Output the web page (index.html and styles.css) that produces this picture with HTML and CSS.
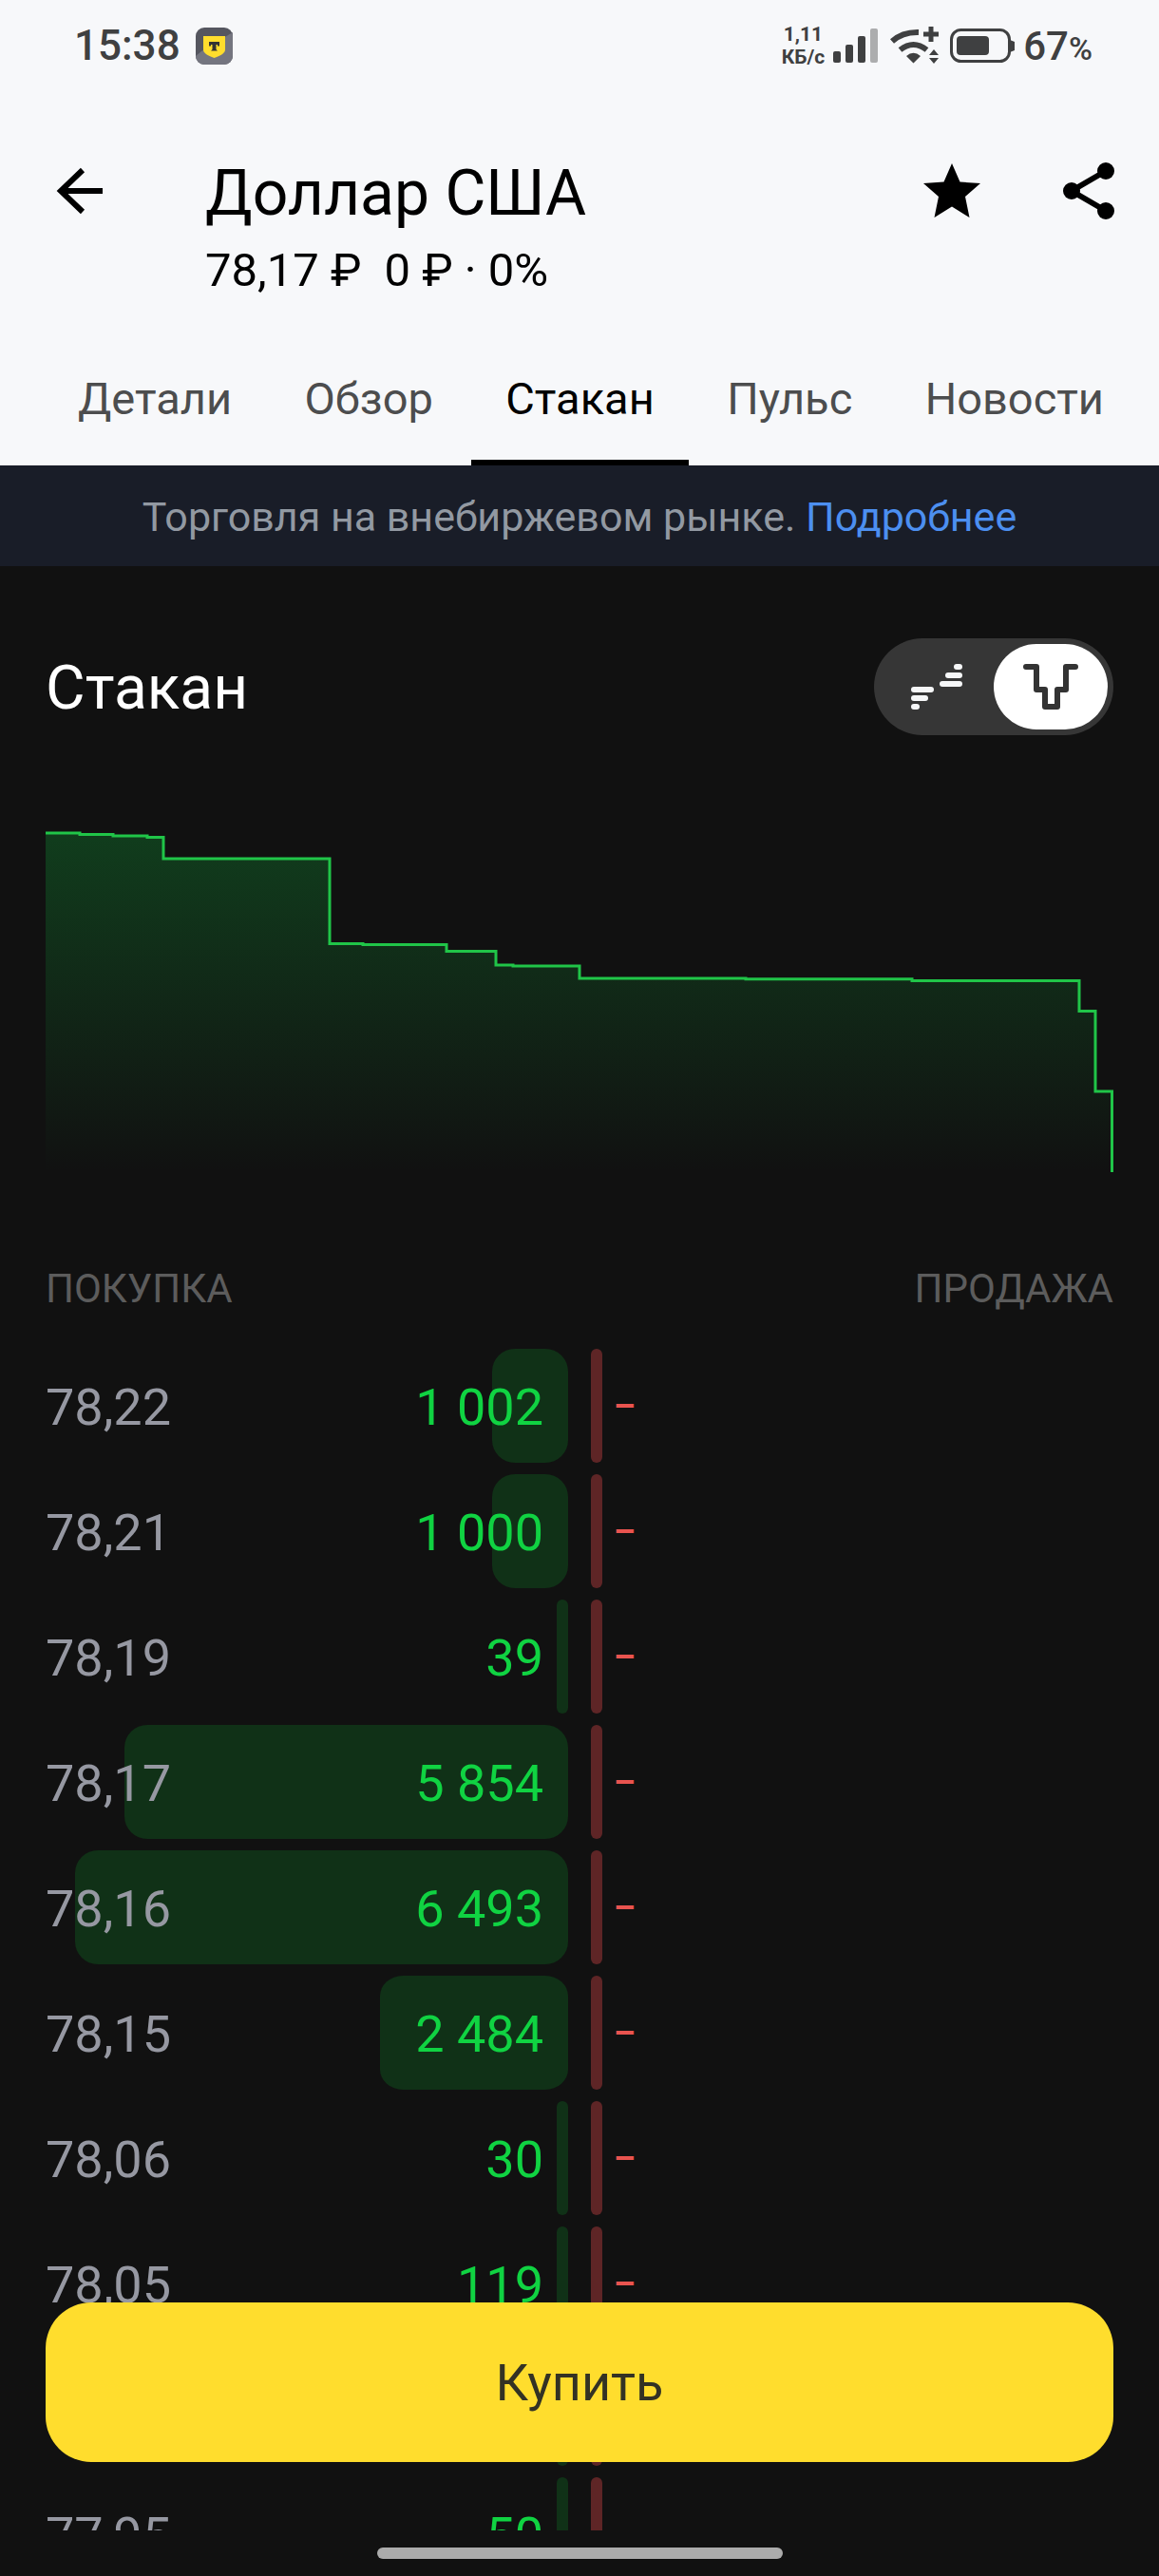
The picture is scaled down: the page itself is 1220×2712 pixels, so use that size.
FILE: index.html
```html
<!DOCTYPE html>
<html lang="ru">
<head>
<meta charset="utf-8">
<meta name="viewport" content="width=device-width, initial-scale=1">
<title>Доллар США — Стакан</title>
<link rel="stylesheet" href="styles.css">
</head>
<body>
<div class="app">
  <header class="top">
    <div class="status">
      <span class="status-time">15:38</span>
      <svg class="status-app" viewBox="0 0 39 39" width="39" height="39" aria-hidden="true">
        <rect width="39" height="39" rx="9" fill="#55565f"/>
        <path d="M39 5v25a9 9 0 0 1-9 9H9a9 9 0 0 1-9-9l6-5z" fill="#74757f"/>
        <path d="M8 9h23v14c0 4-4 6-11.500 9C12 29 8 27 8 23z" fill="#ffdd2d"/>
        <path d="M14 15h11v4.500h-2V18h-1.500v5l1.500 1.500h-7l1.500-1.500v-5H16v1.500h-2z" fill="#333"/>
      </svg>
      <div class="status-right">
        <span class="status-speed">1,11<br>КБ/с</span>
        <svg viewBox="0 0 47 36" width="47" height="36" aria-hidden="true" fill="#3f4041">
          <rect x="0" y="24" width="8" height="12" rx="2"/>
          <rect x="13" y="17" width="8" height="19" rx="2"/>
          <rect x="26" y="8" width="8" height="28" rx="2"/>
          <rect x="39" y="0" width="8" height="36" rx="2" fill="#acadae"/>
        </svg>
        <svg class="status-wifi" viewBox="0 0 52 40" width="52" height="40" aria-hidden="true">
          <g fill="none" stroke="#3f4041" stroke-width="6">
            <path d="M2 15.500Q13 5.500 30 6"/>
            <path d="M10.500 24.500Q24.500 13.500 38.500 24.500"/>
            <path d="M35 8h16M43 0v16" stroke-width="5"/>
          </g>
          <path d="M17 31q7.500-6.500 15 0l-7.500 7.500zM41 30l5-6 5 6zM41 33h10l-5 6z" fill="#3f4041"/>
        </svg>
        <svg viewBox="0 0 68 36" width="68" height="36" aria-hidden="true">
          <rect x="1.500" y="1.500" width="61" height="33" rx="10" fill="none" stroke="#3f4041" stroke-width="3"/>
          <rect x="7" y="8" width="34" height="20" rx="4" fill="#3f4041"/>
          <path d="M63 12l5 2v9l-5 2z" fill="#3f4041"/>
        </svg>
        <span class="status-charge">67<small>%</small></span>
      </div>
    </div>
    <div class="bar">
      <button class="icon-btn" type="button" aria-label="Назад">
        <svg viewBox="0 0 60 60" width="60" height="60" fill="none" stroke="#000" stroke-width="6"><path d="M54 30H10M33 8L10 30l23 22"/></svg>
      </button>
      <div class="heading">
        <h1 class="title">Доллар США</h1>
        <p class="quote"><span>78,17 ₽</span><span>0 ₽ · 0%</span></p>
      </div>
      <div class="actions">
        <button class="icon-btn" type="button" aria-label="В избранное">
          <svg viewBox="0 0 60 60" width="60" height="60"><path d="M30 1l8.500 19.500L60 22 44 36l4.500 22L30 46.500 11.500 58 16 36 0 22l21.500-1.500z"/></svg>
        </button>
        <button class="icon-btn" type="button" aria-label="Поделиться">
          <svg viewBox="0 0 60 60" width="60" height="60"><path d="M48 9L12 30l36 21" fill="none" stroke="#000" stroke-width="6"/><circle cx="48" cy="9" r="9"/><circle cx="12" cy="30" r="9"/><circle cx="48" cy="51" r="9"/></svg>
        </button>
      </div>
    </div>
    <nav class="tabs">
      <a class="tab" href="#details">Детали</a>
      <a class="tab" href="#overview">Обзор</a>
      <a class="tab tab-active" href="#book" aria-current="page">Стакан</a>
      <a class="tab" href="#pulse">Пульс</a>
      <a class="tab" href="#news">Новости</a>
    </nav>
  </header>
  <p class="notice">Торговля на внебиржевом рынке. <a href="#more">Подробнее</a></p>
  <main class="content" id="book">
    <div class="section-head">
      <h2 class="subtitle">Стакан</h2>
      <div class="switch">
        <button class="switch-item" type="button" aria-label="Список" aria-pressed="false">
          <svg viewBox="0 0 54 48" width="54" height="48" fill="#f6f7f8">
            <rect x="45" y="0" width="9" height="6" rx="3"/><rect x="36" y="9" width="18" height="6" rx="3"/><rect x="30" y="18" width="24" height="6" rx="3"/>
            <rect x="0" y="24" width="24" height="6" rx="3"/><rect x="0" y="33" width="18" height="6" rx="3"/><rect x="0" y="42" width="9" height="6" rx="3"/>
          </svg>
        </button>
        <button class="switch-item switch-on" type="button" aria-label="График" aria-pressed="true">
          <svg viewBox="0 0 58 48" width="58" height="48" fill="none" stroke="#333" stroke-width="6" stroke-linecap="round" stroke-linejoin="round"><path d="M3 3h11v24h9v18h13V27h9V3h10"/></svg>
        </button>
      </div>
    </div>
    <svg class="chart" viewBox="0 0 1124 360" preserveAspectRatio="none" role="img" aria-label="Глубина рынка">
      <defs><linearGradient id="depth" x1="0" y1="0" x2="0" y2="1"><stop offset="0" stop-color="#0fd044" stop-opacity=".23"/><stop offset="1" stop-color="#0fd044" stop-opacity="0"/></linearGradient></defs>
      <path fill="url(#depth)" d="M0 3H36V4.500H71V6H107V7.500H124V30H299V119.500H334V120.500H422V127.500H474V142H492V143H562V156H737V156.700H912V158.500H1088V190.500H1105V275H1122.500V360H0z"/>
      <path fill="none" stroke="#20c548" stroke-width="3" d="M0 3H36V4.500H71V6H107V7.500H124V30H299V119.500H334V120.500H422V127.500H474V142H492V143H562V156H737V156.700H912V158.500H1088V190.500H1105V275H1122.500V360"/>
    </svg>
    <table class="book">
      <thead><tr><th>Покупка</th><th class="ask-head">Продажа</th></tr></thead>
      <tbody>
        <tr><td class="bid" style="--depth:80px"><span class="price">78,22</span><span class="amount">1 002</span></td><td class="ask">–</td></tr>
        <tr><td class="bid" style="--depth:80px"><span class="price">78,21</span><span class="amount">1 000</span></td><td class="ask">–</td></tr>
        <tr><td class="bid"><span class="price">78,19</span><span class="amount">39</span></td><td class="ask">–</td></tr>
        <tr><td class="bid" style="--depth:85%"><span class="price">78,17</span><span class="amount">5 854</span></td><td class="ask">–</td></tr>
        <tr><td class="bid" style="--depth:94.3%"><span class="price">78,16</span><span class="amount">6 493</span></td><td class="ask">–</td></tr>
        <tr><td class="bid" style="--depth:36%"><span class="price">78,15</span><span class="amount">2 484</span></td><td class="ask">–</td></tr>
        <tr><td class="bid"><span class="price">78,06</span><span class="amount">30</span></td><td class="ask">–</td></tr>
        <tr><td class="bid"><span class="price">78,05</span><span class="amount">119</span></td><td class="ask">–</td></tr>
        <tr><td class="bid"></td><td class="ask"></td></tr>
        <tr><td class="bid"><span class="price">77,95</span><span class="amount">50</span></td><td class="ask"></td></tr>
      </tbody>
    </table>
  </main>
  <button class="buy" type="button">Купить</button>
  <div class="home"></div>
</div>
</body>
</html>
```
FILE: styles.css
```css
* { box-sizing: border-box; }

body {
  margin: 0;
  background: #111;
  font-family: Roboto, "Noto Sans", sans-serif;
  font-size: 54px;
}

h1, h2, p { margin: 0; font-weight: 400; }
button { border: 0; padding: 0; background: none; font: inherit; cursor: pointer; }
a { text-decoration: none; }
svg { display: block; flex: none; }

.app {
  position: relative;
  display: flex;
  flex-direction: column;
  height: 100vh;
}

.top { background: #f7f8fa; color: #000; }

/* Device status row */
.status {
  display: flex;
  align-items: center;
  gap: 16px;
  height: 96px;
  padding: 0 70px 0 78px;
  color: #3f4041;
  font-weight: 500;
}
.status-time { font-size: 44px; }
.status-right { display: flex; align-items: center; gap: 9px; margin-left: auto; }
.status-speed { font-size: 21px; line-height: 24px; font-weight: 700; text-align: center; }
.status-wifi { margin: 0 2px 0 4px; }
.status-charge { font-size: 42px; }
.status-charge small { font-size: 34px; }

/* Title row */
.bar {
  display: flex;
  align-items: flex-start;
  padding: 60px 44px 0 54px;
}
.icon-btn { display: block; margin-top: 15px; }
.heading { flex: 1; margin-left: 102px; }
.title { padding-top: 3px; font-size: 66px; line-height: 90px; }
.quote { display: flex; gap: 24px; font-size: 49px; line-height: 72px; }
.actions { display: flex; gap: 84px; }

.tabs {
  display: flex;
  justify-content: space-between;
  margin-top: 36px;
  padding: 0 22px 0 46px;
}
.tab {
  padding: 31px 36px 32px;
  border-bottom: 6px solid transparent;
  color: #4c4d4e;
  font-size: 47px;
  line-height: 64px;
}
.tab-active { border-color: #000; color: #000; }

.notice {
  padding: 21px 48px 19px;
  background: #191d28;
  color: #9299a2;
  font-size: 43px;
  line-height: 66px;
  text-align: center;
}
.notice a { color: #4c8ff0; }

.content {
  flex: 1;
  min-height: 0;
  padding: 76px 48px 0;
  overflow-y: auto;
  scrollbar-width: none;
  color: #fff;
}

.section-head { display: flex; align-items: center; justify-content: space-between; }
.subtitle { padding-top: 3px; font-size: 64px; line-height: 90px; }

.switch { display: flex; padding: 6px; border-radius: 51px; background: #363636; }
.switch-item {
  display: flex;
  align-items: center;
  justify-content: center;
  width: 120px;
  height: 90px;
  border-radius: 45px;
}
.switch-on { background: #fff; }

.chart { width: 100%; height: 360px; margin: 100px 0 96px; }

/* Order book */
.book { display: block; }
.book thead, .book tbody { display: grid; gap: 12px; }
.book tr { display: grid; grid-template-columns: 1fr 1fr; column-gap: 24px; }
.book th {
  padding: 0 0 36px;
  color: #5c5c5c;
  font-size: 42px;
  line-height: 54px;
  font-weight: 400;
  text-align: left;
  text-transform: uppercase;
}
.book .ask-head { text-align: right; }

.bid, .ask {
  position: relative;
  display: flex;
  align-items: center;
  justify-content: space-between;
  height: 120px;
  padding: 2px 26px 0 0;
}
.bid::before, .ask::before {
  content: "";
  position: absolute;
  inset: 0 0 0 auto;
  width: var(--depth, 12px);
  border-radius: min(24px, calc(var(--depth, 12px) / 2));
  background: #103117;
}
.ask { padding: 2px 0 0 24px; color: #e9544f; font-size: 36px; font-weight: 700; }
.ask::before { inset: 0 auto 0 0; background: #5e2526; }
.price, .amount { position: relative; }
.price { color: #9698a2; }
.amount { color: #10d342; }

.buy {
  position: absolute;
  right: 48px;
  bottom: 120px;
  left: 48px;
  height: 168px;
  border-radius: 48px;
  background: #ffdd2d;
  color: #333224;
}

.home { flex: none; padding: 18px 0; }
.home::before {
  content: "";
  display: block;
  width: 35%;
  height: 12px;
  margin: 0 auto;
  border-radius: 6px;
  background: #ababab;
}
```
